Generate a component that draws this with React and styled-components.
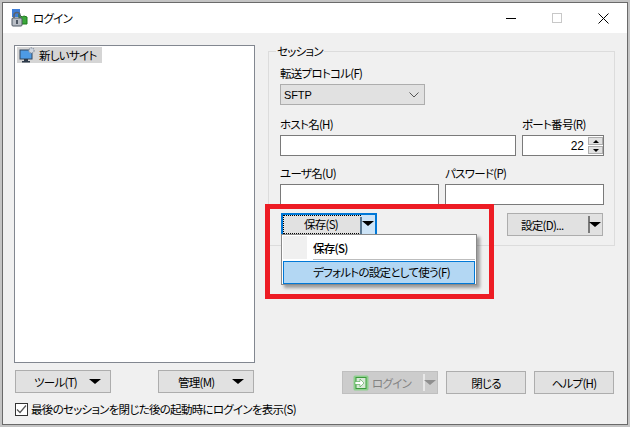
import React from 'react';
import styled, { createGlobalStyle } from 'styled-components';

const GlobalStyle = createGlobalStyle`
  html, body {
    margin: 0;
    padding: 0;
    width: 630px;
    height: 427px;
    overflow: hidden;
    background: #c4c4c4;
  }
  * {
    box-sizing: border-box;
  }
  body {
    font-family: "Noto Sans CJK JP", "Liberation Sans", sans-serif;
    font-size: 11.5px;
    letter-spacing: -0.72px;
    font-feature-settings: "palt";
    color: #000;
  }
`;

const Window = styled.div`
  display: flex;
  flex-direction: column;
  width: 626px;
  height: 423px;
  margin: 2px;
  background: #f0f0f0;
  border: 1px solid #6a6a6a;
`;

const TitleBar = styled.div`
  display: flex;
  align-items: center;
  height: 30px;
  padding-left: 8px;
  background: #fff;
`;

const Title = styled.span`
  margin-left: 5px;
  line-height: 16px;
`;

const WindowControls = styled.div`
  display: flex;
  margin-left: auto;
  margin-right: 1px;
`;

const WindowControl = styled.div`
  display: flex;
  align-items: center;
  justify-content: center;
  width: 46px;
  height: 30px;
`;

const Body = styled.div`
  display: flex;
  flex: 1;
  gap: 13px;
  padding: 12px 12px 0 11px;
`;

const LeftColumn = styled.div`
  display: flex;
  flex-direction: column;
  width: 241px;
`;

const SiteTree = styled.div`
  height: 318px;
  padding: 1px 2px;
  background: #fff;
  border: 1px solid #828790;
`;

const SiteItem = styled.div`
  display: flex;
  align-items: center;
  gap: 4px;
  width: 85px;
  height: 16px;
  padding-left: 2px;
  background: #d5d5d5;
  line-height: 16px;
  white-space: nowrap;
`;

const LeftButtons = styled.div`
  display: flex;
  justify-content: space-between;
  margin-top: 7px;
  padding: 0 1px;
`;

const Button = styled.div`
  display: flex;
  align-items: center;
  justify-content: center;
  flex: none;
  width: ${(p) => p.$width || 96}px;
  height: 23px;
  background: ${(p) => (p.$disabled ? '#cccccc' : '#e1e1e1')};
  border: 1px solid ${(p) => (p.$disabled ? '#bfbfbf' : '#adadad')};
  color: ${(p) => (p.$disabled ? '#838383' : '#000')};
  line-height: 16px;
  white-space: nowrap;
`;

const MenuButton = styled(Button)`
  position: relative;
  justify-content: flex-start;
  padding-left: ${(p) => p.$pad}px;
`;

const Caret = styled.span`
  position: absolute;
  right: ${(p) => p.$right}px;
  top: ${(p) => p.$top || 8}px;
  width: 0;
  height: 0;
  border-style: solid;
  border-width: 5px 6px 0;
  border-color: ${(p) => p.$color || '#000'} transparent transparent;
`;

const SplitDivider = styled.span`
  position: absolute;
  right: ${(p) => p.$right ?? 12}px;
  top: 2px;
  width: 2px;
  height: 17px;
  background: ${(p) => p.$color || '#7a7a7a'};
`;

const CheckRow = styled.label`
  display: flex;
  align-items: center;
  gap: 3px;
  margin-top: 8px;
  padding-left: 1px;
  line-height: 16px;
  white-space: nowrap;
`;

const CheckBox = styled.span`
  display: flex;
  align-items: center;
  justify-content: center;
  width: 13px;
  height: 13px;
  background: #fff;
  border: 1px solid #333;
`;

const RightColumn = styled.div`
  display: flex;
  flex-direction: column;
  width: 347px;
`;

const Group = styled.fieldset`
  height: 203px;
  margin: -2px 0 0;
  padding: 6px 0 0 11px;
  border: 1px solid #dcdcdc;
  min-width: 0;
`;

const Legend = styled.legend`
  margin-left: -4px;
  padding: 0 1px;
  line-height: 16px;
`;

const Label = styled.div`
  height: 16px;
  line-height: 16px;
  margin-bottom: 3px;
  white-space: nowrap;
`;

const SelectBox = styled.div`
  display: flex;
  align-items: center;
  justify-content: space-between;
  width: 145px;
  height: 21px;
  margin-bottom: 11px;
  padding: 0 5px 0 3px;
  background: #e1e1e1;
  border: 1px solid #adadad;
  font-family: "Liberation Sans", sans-serif;
  font-size: 11px;
  letter-spacing: -0.1px;
`;

const Row = styled.div`
  display: flex;
  gap: ${(p) => p.$gap}px;
  margin-bottom: ${(p) => p.$bottom || 0}px;
`;

const Input = styled.div`
  display: flex;
  align-items: center;
  width: ${(p) => p.$width}px;
  height: 21px;
  background: #fff;
  border: 1px solid #7a7a7a;
`;

const PortValue = styled.span`
  margin-left: auto;
  margin-right: 4px;
  font-family: "Liberation Sans", sans-serif;
  font-size: 12px;
  letter-spacing: 0;
`;

const Spinner = styled.div`
  display: flex;
  flex-direction: column;
  gap: 1px;
`;

const SpinButton = styled.div`
  display: flex;
  align-items: center;
  justify-content: center;
  width: 15px;
  height: 8px;
  background: #e1e1e1;
  border: 1px solid #adadad;
`;

const SpinArrow = styled.span`
  width: 0;
  height: 0;
  border-style: solid;
  border-color: transparent;
  border-width: ${(p) => (p.$up ? '0 3px 3px' : '3px 3px 0')};
  border-bottom-color: ${(p) => (p.$up ? '#000' : 'transparent')};
  border-top-color: ${(p) => (p.$up ? 'transparent' : '#000')};
`;

const SaveRow = styled.div`
  display: flex;
  justify-content: space-between;
  padding: 0 11px 0 1px;
`;

const SaveSplit = styled.div`
  position: relative;
  display: flex;
  width: 96px;
  height: 22px;
  background: #cde4f7;
  border: 2px solid #0078d7;
  border-bottom-width: 1px;
`;

const SaveMain = styled.div`
  display: flex;
  align-items: center;
  justify-content: center;
  width: 78px;
  padding: 0 2px 1px 0;
  background: #e1e1e1;
  border: 1px dotted #000;
  line-height: 16px;
`;

const SaveDrop = styled.div`
  position: relative;
  flex: 1;
`;

const Highlight = styled.div`
  position: absolute;
  left: -18px;
  top: -11px;
  width: 229px;
  height: 95px;
  border: 5px solid #ed1c24;
`;

const Menu = styled.div`
  position: absolute;
  left: -2px;
  top: 19px;
  width: 196px;
  height: 51px;
  padding: 1px;
  background: #fff;
  border: 1px solid #8a8a8a;
  box-shadow: 3px 3px 3px rgba(0, 0, 0, 0.35);
`;

const MenuTop = styled.div`
  display: flex;
  height: 23px;
  background: linear-gradient(to right, #f0f0f0 24px, #fff 24px);
`;

const MenuLabel = styled.span`
  margin: 4px 0 0 30px;
  line-height: 16px;
  font-weight: 500;
`;

const MenuSeparator = styled.div`
  height: 1px;
  margin-left: 30px;
  background: #bdbdbd;
`;

const MenuActive = styled.div`
  height: 23px;
  margin-top: 1px;
  padding-left: 29px;
  background: #b3d7f3;
  border: 1px solid #0078d7;
  line-height: 20px;
`;

const BottomButtons = styled.div`
  display: flex;
  justify-content: flex-end;
  gap: 8px;
  margin-top: 125px;
  padding-right: 1px;
`;

const LoginContent = styled.span`
  display: flex;
  align-items: center;
  gap: 3px;
`;

const LockIcon = () => (
  <svg width="17" height="18" viewBox="0 0 17 18">
    <rect x="1" y="0" width="8" height="8" fill="#3f7fd9" />
    <path d="M8 5l3 3 2-1 3 1v7H8z" fill="#3aa83a" stroke="#1d7a1d" />
    <path d="M3 9V6.5a3 3 0 0 1 6 0V9" fill="none" stroke="#5a6470" strokeWidth="1.5" />
    <rect x="1" y="9" width="10" height="8" rx="1" fill="#b9bec6" stroke="#4f5864" />
    <rect x="5" y="11" width="2" height="4" fill="#4f5864" />
  </svg>
);

const SiteIcon = () => (
  <svg width="16" height="16" viewBox="0 0 16 16">
    <rect x="1" y="3" width="12" height="9" fill="#4d9be6" stroke="#33475f" />
    <rect x="5" y="12" width="4" height="2" fill="#2d3a4a" />
    <rect x="3" y="14" width="8" height="1.5" fill="#2d3a4a" />
    <circle cx="12.5" cy="3.5" r="2.6" fill="#cfd6df" stroke="#8b96a5" strokeWidth="1.2" strokeDasharray="1.4 0.8" />
  </svg>
);

const LoginIcon = () => (
  <svg width="16" height="16" viewBox="0 0 16 16">
    <rect x="0.5" y="0.5" width="15" height="15" rx="1.5" fill="#8ed08e" />
    <rect x="3" y="2.5" width="10" height="11" fill="#d8e8d8" stroke="#3d9a3d" />
    <path d="M2 6.5h5V4l4 4-4 4V9.5H2z" fill="#fff" stroke="#4aa54a" strokeWidth="0.6" />
  </svg>
);

const App = () => (
  <>
    <GlobalStyle />
    <Window>
      <TitleBar>
        <LockIcon />
        <Title>ログイン</Title>
        <WindowControls>
          <WindowControl>
            <svg width="10" height="10" viewBox="0 0 10 10">
              <path d="M0 5.5h10" stroke="#000" />
            </svg>
          </WindowControl>
          <WindowControl>
            <svg width="10" height="10" viewBox="0 0 10 10">
              <rect x="0.5" y="0.5" width="9" height="9" fill="none" stroke="#c8c8c8" />
            </svg>
          </WindowControl>
          <WindowControl>
            <svg width="11" height="11" viewBox="0 0 11 11">
              <path d="M0.5 0.5l10 10M10.5 0.5l-10 10" stroke="#000" />
            </svg>
          </WindowControl>
        </WindowControls>
      </TitleBar>
      <Body>
        <LeftColumn>
          <SiteTree>
            <SiteItem>
              <SiteIcon />
              新しいサイト
            </SiteItem>
          </SiteTree>
          <LeftButtons>
            <MenuButton $pad={18}>
              ツール(T)
              <Caret $right={9} />
            </MenuButton>
            <MenuButton $pad={19}>
              管理(M)
              <Caret $right={9} />
            </MenuButton>
          </LeftButtons>
          <CheckRow>
            <CheckBox>
              <svg width="11" height="11" viewBox="0 0 11 11">
                <path d="M1 5.5l3 3 6-7" fill="none" stroke="#555" strokeWidth="1.2" />
              </svg>
            </CheckBox>
            最後のセッションを閉じた後の起動時にログインを表示(S)
          </CheckRow>
        </LeftColumn>
        <RightColumn>
          <Group>
            <Legend>セッション</Legend>
            <Label>転送プロトコル(F)</Label>
            <SelectBox>
              SFTP
              <svg width="10" height="6" viewBox="0 0 10 6">
                <path d="M0.5 0.5L5 5l4.5-4.5" fill="none" stroke="#555" />
              </svg>
            </SelectBox>
            <Row $gap={6} $bottom={9}>
              <div>
                <Label>ホスト名(H)</Label>
                <Input $width={236} />
              </div>
              <div>
                <Label>ポート番号(R)</Label>
                <Input $width={82}>
                  <PortValue>22</PortValue>
                  <Spinner>
                    <SpinButton>
                      <SpinArrow $up />
                    </SpinButton>
                    <SpinButton>
                      <SpinArrow />
                    </SpinButton>
                  </Spinner>
                </Input>
              </div>
            </Row>
            <Row $gap={6} $bottom={8}>
              <div>
                <Label>ユーザ名(U)</Label>
                <Input $width={159} />
              </div>
              <div>
                <Label>パスワード(P)</Label>
                <Input $width={159} />
              </div>
            </Row>
            <SaveRow>
              <SaveSplit>
                <SaveMain>保存(S)</SaveMain>
                <SaveDrop>
                  <SplitDivider $color="#5a7a95" $right={13} />
                  <Caret $right={1} $top={6} />
                </SaveDrop>
                <Menu>
                  <MenuTop>
                    <MenuLabel>保存(S)</MenuLabel>
                  </MenuTop>
                  <MenuSeparator />
                  <MenuActive>デフォルトの設定として使う(F)</MenuActive>
                </Menu>
                <Highlight />
              </SaveSplit>
              <MenuButton $pad={13}>
                設定(D)...
                <SplitDivider />
                <Caret $right={1} />
              </MenuButton>
            </SaveRow>
          </Group>
          <BottomButtons>
            <MenuButton $disabled $pad={10}>
              <LoginContent>
                <LoginIcon />
                ログイン
              </LoginContent>
              <SplitDivider $color="#e8e8e8" />
              <Caret $right={1} $color="#8f8f8f" />
            </MenuButton>
            <Button $width={80}>閉じる</Button>
            <Button $width={80}>ヘルプ(H)</Button>
          </BottomButtons>
        </RightColumn>
      </Body>
    </Window>
  </>
);

export default App;
